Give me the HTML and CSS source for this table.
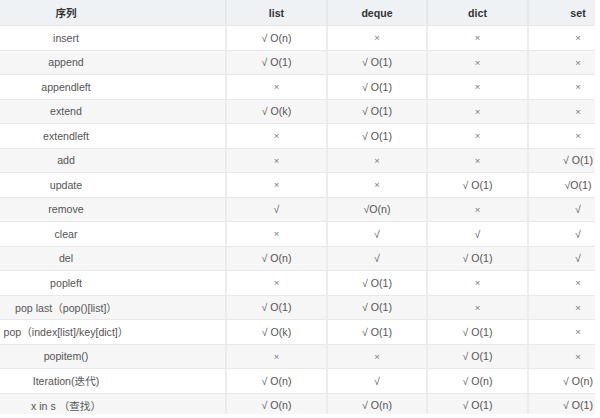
FILE: index.html
```html
<!DOCTYPE html>
<html>
<head>
<meta charset="utf-8">
<link rel="stylesheet" href="styles.css">
</head>
<body>
<div class="frame">
  <div class="grid">
    <div class="c h">序列</div><div class="c h">list</div><div class="c h">deque</div><div class="c h">dict</div><div class="c h">set</div>

    <div class="c">insert</div><div class="c">√ O(n)</div><div class="c x">×</div><div class="c x">×</div><div class="c x">×</div>
    <div class="c s">append</div><div class="c s">√ O(1)</div><div class="c s">√ O(1)</div><div class="c s x">×</div><div class="c s x">×</div>
    <div class="c">appendleft</div><div class="c x">×</div><div class="c">√ O(1)</div><div class="c x">×</div><div class="c x">×</div>
    <div class="c s">extend</div><div class="c s">√ O(k)</div><div class="c s">√ O(1)</div><div class="c s x">×</div><div class="c s x">×</div>
    <div class="c">extendleft</div><div class="c x">×</div><div class="c">√ O(1)</div><div class="c x">×</div><div class="c x">×</div>
    <div class="c s">add</div><div class="c s x">×</div><div class="c s x">×</div><div class="c s x">×</div><div class="c s">√ O(1)</div>
    <div class="c">update</div><div class="c x">×</div><div class="c x">×</div><div class="c">√ O(1)</div><div class="c">√O(1)</div>
    <div class="c s">remove</div><div class="c s">√</div><div class="c s">√O(n)</div><div class="c s x">×</div><div class="c s">√</div>
    <div class="c">clear</div><div class="c x">×</div><div class="c">√</div><div class="c">√</div><div class="c">√</div>
    <div class="c s">del</div><div class="c s">√ O(n)</div><div class="c s">√</div><div class="c s">√ O(1)</div><div class="c s">√</div>
    <div class="c">popleft</div><div class="c x">×</div><div class="c">√ O(1)</div><div class="c x">×</div><div class="c x">×</div>
    <div class="c s">pop last（pop()[list]）</div><div class="c s">√ O(1)</div><div class="c s">√ O(1)</div><div class="c s x">×</div><div class="c s x">×</div>
    <div class="c">pop（index[list]/key[dict]）</div><div class="c">√ O(k)</div><div class="c">√ O(1)</div><div class="c">√ O(1)</div><div class="c x">×</div>
    <div class="c s">popitem()</div><div class="c s x">×</div><div class="c s x">×</div><div class="c s">√ O(1)</div><div class="c s x">×</div>
    <div class="c">Iteration(迭代)</div><div class="c">√ O(n)</div><div class="c">√</div><div class="c">√ O(n)</div><div class="c">√ O(n)</div>
    <div class="c s">x in s （查找）</div><div class="c s">√ O(n)</div><div class="c s">√ O(n)</div><div class="c s">√ O(1)</div><div class="c s">√ O(1)</div>
  </div>
</div>
</body>
</html>
```
FILE: styles.css
```css
html, body {
  margin: 0;
  padding: 0;
  background: #ffffff;
}

.frame {
  width: 595px;
  height: 414px;
  overflow: hidden;
}

.grid {
  display: grid;
  grid-template-columns: 318px 101px 100px 101px 100px;
  grid-template-rows: 25px repeat(16, 24.5px);
  margin-left: -93px;
  width: 720px;
  font-family: "Liberation Sans", Arial, "Noto Sans CJK SC", sans-serif;
  font-size: 10.6px;
  color: #555555;
}

.c {
  display: flex;
  align-items: center;
  justify-content: center;
  white-space: nowrap;
  border-top: 1px solid #e8e8e8;
  border-left: 2px solid #ececec;
  background: #ffffff;
  box-sizing: border-box;
}

.grid > .c:nth-child(5n+1) {
  border-left: none;
}

.h {
  background: #eef2f5;
  color: #333333;
  font-weight: bold;
  border-top: none;
  border-left-color: #e4e8eb;
}

.s {
  background: #f6f6f6;
}

.x {
  color: #777777;
  font-size: 9.5px;
}
```
